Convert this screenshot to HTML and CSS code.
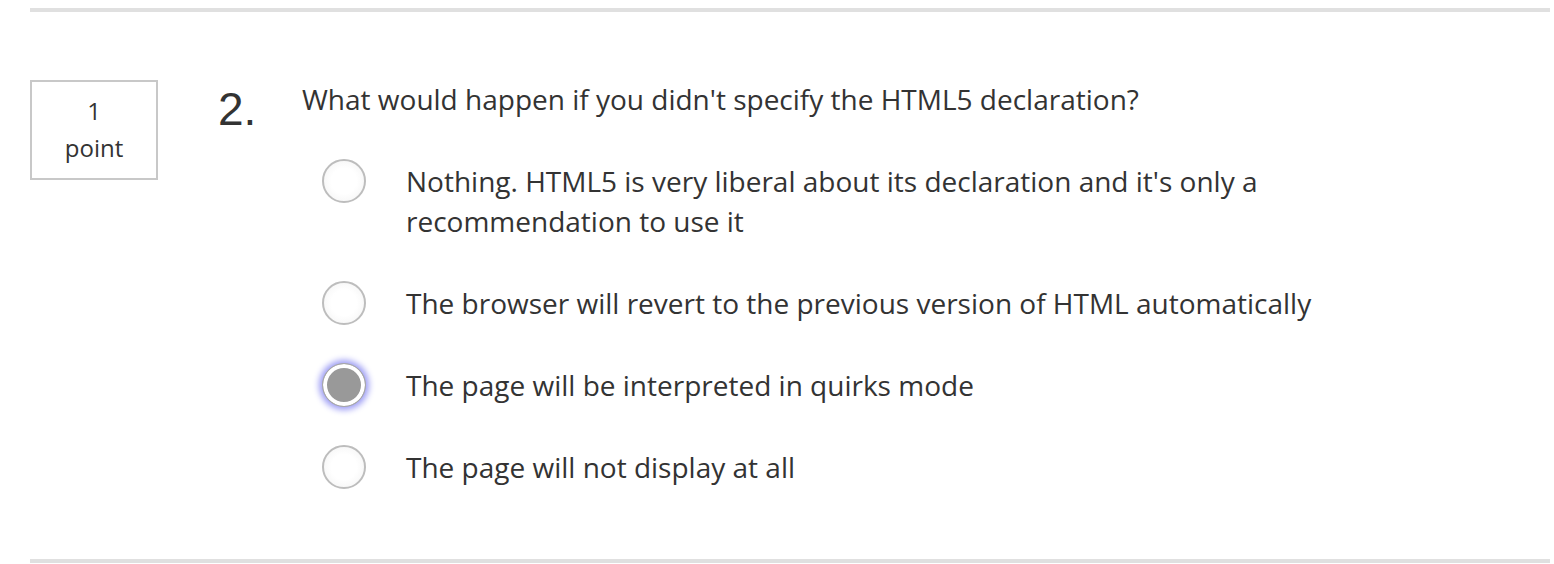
FILE: index.html
```html
<!DOCTYPE html>
<html lang="en">
<head>
<meta charset="utf-8">
<title>Quiz question</title>
<link rel="stylesheet" href="styles.css">
</head>
<body>
<div class="question">
  <div class="points"><span>1</span><span>point</span></div>
  <div class="number">2.</div>
  <div class="body">
    <div class="prompt">What would happen if you didn't specify the HTML5 declaration?</div>
    <div class="options">
      <label class="option"><span class="radio"></span><span class="text">Nothing. HTML5 is very liberal about its declaration and it's only a recommendation to use it</span></label>
      <label class="option"><span class="radio"></span><span class="text">The browser will revert to the previous version of HTML automatically</span></label>
      <label class="option"><span class="radio checked"></span><span class="text">The page will be interpreted in quirks mode</span></label>
      <label class="option"><span class="radio"></span><span class="text">The page will not display at all</span></label>
    </div>
  </div>
</div>
</body>
</html>
```

FILE: styles.css
```css
* { box-sizing: border-box; }
html, body { margin: 0; padding: 0; background: #fff; }
body {
  font-family: "Open Sans", "Noto Sans", sans-serif;
  color: #333;
}
.question {
  margin: 8px 4px 0 30px;
  border-top: 4px solid #e0e0e0;
  border-bottom: 4px solid #e0e0e0;
  padding: 68px 0 72px 0;
  display: grid;
  grid-template-columns: 128px 84px 1fr;
  column-gap: 60px;
  align-items: start;
}
.points {
  width: 128px;
  height: 100px;
  border: 2px solid #c8c8c8;
  display: flex;
  flex-direction: column;
  align-items: center;
  justify-content: center;
  font-size: 24px;
  line-height: 37px;
  padding-bottom: 3px;
  color: #333;
}
.number {
  grid-column: 2;
  font-family: "Liberation Sans", Arial, sans-serif;
  font-size: 46px;
  line-height: 53px;
  color: #333;
  margin-top: 3px;
}
.body {
  margin-left: -60px;
}
.prompt {
  font-size: 28px;
  line-height: 40px;
  margin-top: -1px;
}
.options {
  display: flex;
  flex-direction: column;
  gap: 42px;
  margin-top: 42px;
  padding-left: 20px;
}
.option {
  display: flex;
  align-items: flex-start;
  gap: 41px;
  font-size: 28px;
  line-height: 40px;
}
.text {
  max-width: 980px;
  margin-left: -1px;
}
.radio {
  flex: none;
  width: 44px;
  height: 44px;
  margin: -2px 0;
  border-radius: 50%;
  border: 2px solid #bdbdbd;
  background: radial-gradient(circle at 50% 50%, #ffffff 0%, #ffffff 45%, #f1f1f1 100%);
}
.radio.checked {
  border: 1.5px solid #a8a8a8;
  background: #999;
  box-shadow: inset 0 0 0 4px #fff, 0 0 6px 3px #9c9cf4;
}
```
